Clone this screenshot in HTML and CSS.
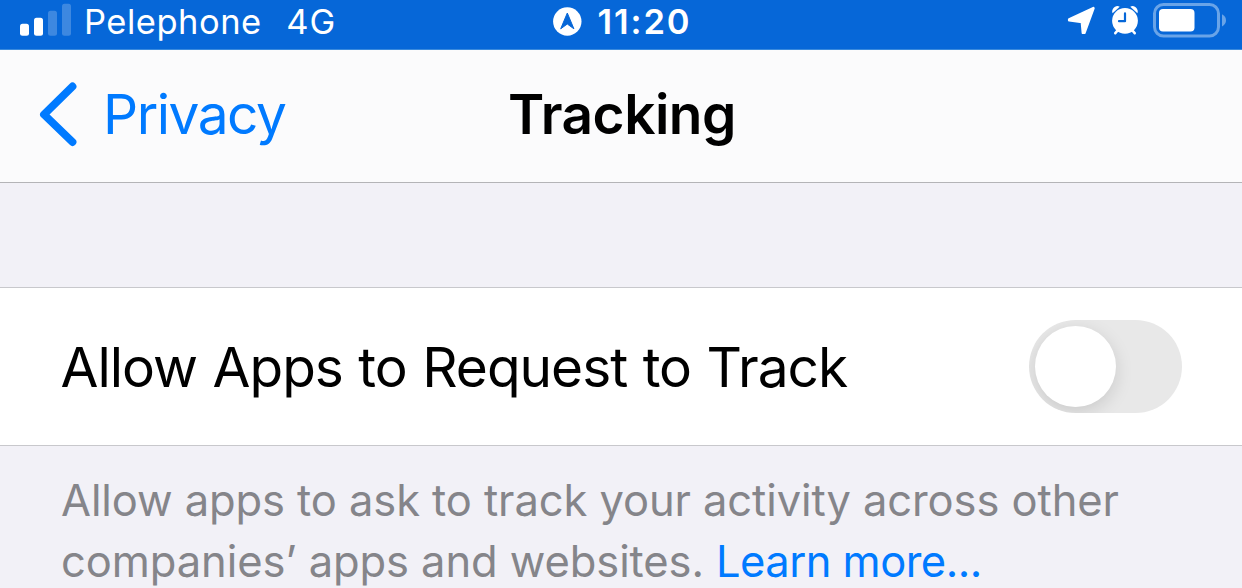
FILE: index.html
```html
<!DOCTYPE html>
<html lang="en">
<head>
<meta charset="utf-8">
<title>Tracking</title>
<link rel="stylesheet" href="styles.css">
</head>
<body>
<header class="status">
  <div class="carrier">
    <svg class="signal" width="52" height="34" viewBox="0 0 52 34"><g fill="#fff"><rect x="0" y="21.7" width="9" height="12" rx="2.5"/><rect x="14" y="15.7" width="9" height="18" rx="2.5"/><g opacity=".22"><rect x="28" y="8.7" width="9" height="25" rx="2.5"/><rect x="42" y="1.7" width="9" height="32" rx="2.5"/></g></g></svg>
    <span class="operator">Pelephone</span>
    <span class="network">4G</span>
  </div>
  <div class="clock">
    <svg width="29" height="29" viewBox="0 0 29 29"><circle cx="14.3" cy="14.5" r="14.2" fill="#fff"/><path d="M14.3 6 20.9 21.8 14.3 17 7.7 21.8Z" fill="#0667d8" stroke="#0667d8" stroke-linejoin="round"/></svg>
    <span class="time">11:20</span>
  </div>
  <div class="indicators">
    <svg width="28" height="29" viewBox="0 0 28 29"><path d="M26.4 2.2 17.4 26.8 15.9 26.8 14.9 16 2.2 14.2 2.2 13.4Z" fill="#fff" stroke="#fff" stroke-width="2.6" stroke-linejoin="round"/></svg>
    <svg class="alarm" width="28" height="30" viewBox="0 0 28 30"><g fill="none" stroke="#fff" stroke-linecap="round"><path d="M7 25 4.3 28.2M21 25l2.7 3.2" stroke-width="2.6"/></g><path d="M1.6 8.2C-.4 4.5 5-1.2 8.7 1.8Z M26.4 8.2C28.4 4.5 23-1.2 19.3 1.8Z" fill="#fff"/><circle cx="14" cy="15.8" r="12.9" fill="#fff"/><path d="M14 8.4V16.2H8" fill="none" stroke="#0667d8" stroke-width="2.2" stroke-linecap="round" stroke-linejoin="round"/></svg>
    <svg class="battery" width="74" height="35" viewBox="0 0 74 35"><rect x="1.5" y="1.5" width="64" height="31.5" rx="9" fill="none" stroke="#69a4e8" stroke-width="3"/><rect x="6" y="6" width="35.5" height="22.5" rx="4" fill="#fff"/><path d="M69 11.2Q73 13.3 73 17.3T69 23.4Z" fill="#69a4e8"/></svg>
  </div>
</header>
<nav class="navbar">
  <a class="back">
    <svg width="40" height="66" viewBox="0 0 40 66"><path d="M33.5 5.5 5 33.5 33.5 61" fill="none" stroke="#007aff" stroke-width="7.8" stroke-linecap="round" stroke-linejoin="round"/></svg>
    <span class="back-label">Privacy</span>
  </a>
  <h1 class="title">Tracking</h1>
</nav>
<main>
  <section class="row">
    <span class="row-label">Allow Apps to Request to Track</span>
    <span class="switch" role="switch" aria-checked="false"><span class="knob"></span></span>
  </section>
  <p class="note"><span class="note-first">Allow apps to ask to track your activity across other</span><br><span class="note-second">companies’ apps and websites.</span> <a class="link">Learn more...</a></p>
</main>
</body>
</html>
```
FILE: styles.css
```css
* { box-sizing: border-box; }
body { margin: 0; height: 588px; overflow: hidden; background: #f2f1f7; font-family: Inter, "Liberation Sans", sans-serif; white-space: nowrap; }
svg { display: block; flex: none; overflow: visible; }
.status { display: grid; grid-template-columns: 553px 500px 189px; height: 50px; background: #0667d8; color: #fff; font-size: 34.5px; line-height: 43px; border-bottom: 1px solid #398add; }
.carrier, .clock, .indicators { display: flex; align-items: flex-start; }
.carrier { padding-left: 20px; }
.signal { margin-top: 2px; }
.operator { margin-left: 12px; letter-spacing: 0.5px; }
.network { margin-left: 24.5px; letter-spacing: 1px; }
.clock svg { margin-top: 7px; }
.time { margin-left: 15.5px; font-weight: 600; letter-spacing: 1.9px; }
.indicators { padding: 6px 0 0 14px; }
.alarm { margin-left: 15.5px; margin-top: -1px; }
.battery { margin-left: 14.5px; margin-top: -3px; }
.navbar { display: grid; grid-template-columns: 508px 1fr; align-items: start; height: 133px; background: #fbfbfc; border-bottom: 1px solid #b4b4b7; }
.back { display: flex; color: #007aff; font-size: 55px; line-height: 129px; }
.back svg { margin: 31px 0 0 39px; }
.back-label { margin-left: 24px; letter-spacing: -1.5px; }
.title { margin: 0; font-size: 55px; line-height: 129px; font-weight: 600; letter-spacing: -0.5px; }
.row { display: flex; justify-content: space-between; align-items: flex-start; height: 159px; margin-top: 104px; padding: 0 60px 0 61px; background: #fff; border-top: 1px solid #c8c8cc; border-bottom: 1px solid #c8c8cc; }
.row-label { margin-left: -0.5px; font-size: 55px; line-height: 158px; letter-spacing: -1px; word-spacing: 1px; }
.switch { width: 153px; height: 93px; margin-top: 32px; padding: 6px; border-radius: 47px; background: #e8e8e8; overflow: hidden; }
.knob { display: block; width: 81px; height: 81px; border-radius: 50%; background: #fff; box-shadow: 0 5px 18px rgba(0,0,0,.13); }
.note { margin: 0; padding: 24px 0 0 61px; color: #85858a; font-size: 43.5px; line-height: 61px; letter-spacing: -0.09px; }
.link { color: #007aff; letter-spacing: -0.54px; }
```
